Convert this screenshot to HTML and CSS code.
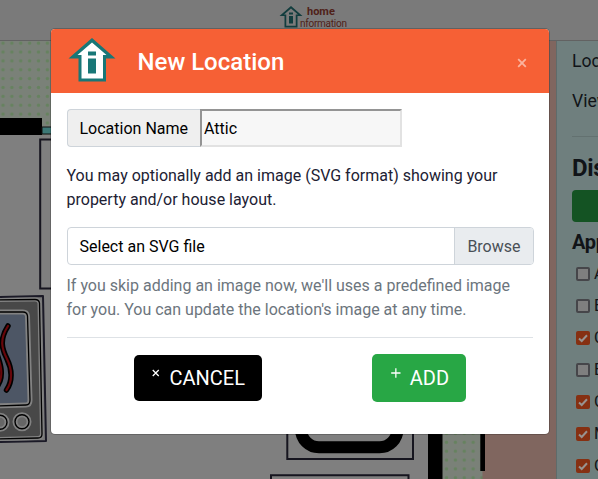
FILE: index.html
```
<!DOCTYPE html>
<html lang="en">
<head>
<meta charset="utf-8">
<title>New Location</title>
<link rel="stylesheet" href="styles.css">
</head>
<body>
<div class="page">
  <header class="topbar">
    <svg class="topbar-logo" width="24" height="24" viewBox="0 0 48 46"><path d="M24 1 47 21H37V44H11V21H1Z" fill="#123d3e"/><path d="M24 6 38 18H33.500V40.500H14.500V18H10Z" fill="#7a7a7a"/><path d="M20 14h8v4h-8zM20 21h8v15h-8z" fill="#123d3e"/></svg>
    <div class="brand"><span class="brand-home">home</span><span class="brand-info">nformation</span></div>
  </header>
  <main class="workspace">
    <svg class="plan" width="556" height="438" viewBox="0 41 556 438">
      <defs><pattern id="dots" x="-1.4" y="38.7" width="8.87" height="8.87" patternUnits="userSpaceOnUse"><circle cx="4.43" cy="4.43" r="1.75" fill="#66825f"/></pattern></defs>
      <path d="M0 41H556V479H0Z" fill="#7a8178"/>
      <path d="M0 41H556V479H0Z" fill="url(#dots)"/>
      <path d="M0 135H428V479H0Z" fill="#7f7f7f"/>
      <path d="M0 118H42V135H0Z"/>
      <path d="M42 127H60V134H42Z" fill="#3c7876" stroke="#111" stroke-width="1"/>
      <path d="M40.200 139.500H100V288.500H40.200Z" fill="#7f7f7f" stroke="#16151f" stroke-width="2"/>
      <g stroke-linejoin="round">
        <path d="M-5 297 43 296 46 441-5 442Z" fill="#777" stroke="#1b1a27" stroke-width="2"/>
        <path d="M-5 300 35 299.500Q39 299.500 39.500 303L42 434Q42 438 38 438L-5 439Z" fill="#484848" stroke="#828282" stroke-width="4"/>
        <path d="M-5 300 35 299.500Q39 299.500 39.500 303L42 434Q42 438 38 438L-5 439Z" fill="none" stroke="#000" stroke-width="1.300"/>
        <path d="M-5 312H23Q27 312 27.500 316L30 400Q30 405 26 405L-5 406Z" fill="#4d5665" stroke="#828282" stroke-width="5"/>
        <path d="M-5 312H23Q27 312 27.500 316L30 400Q30 405 26 405L-5 406Z" fill="none" stroke="#000" stroke-width="1.300"/>
        <g fill="none" stroke-linecap="round"><path d="M8 326C-1 340 2 349 7 359S13 381 6.500 390M-6 345C-2 358 4 370 0 381L-3 387" stroke="#000" stroke-width="5.500"/><path d="M8 326C-1 340 2 349 7 359S13 381 6.500 390M-6 345C-2 358 4 370 0 381L-3 387" stroke="#67060a" stroke-width="2.200"/></g>
        <g fill="#666" stroke="#828282" stroke-width="5"><circle cx="0" cy="422.300" r="7"/><circle cx="22" cy="421.700" r="7"/></g>
        <g fill="none" stroke="#000" stroke-width="1.400"><circle cx="0" cy="422.300" r="7"/><circle cx="22" cy="421.700" r="7"/></g>
      </g>
      <path d="M287.300 400H413V459H287.300Z" fill="#7f7f7f" stroke="#16151f" stroke-width="2"/>
      <rect x="301" y="390" width="96.500" height="57.300" rx="18" fill="#7f7f7f" stroke="#000" stroke-width="12"/>
      <path d="M271 475.200H408.500V490H271Z" fill="#7f7f7f" stroke="#16151f" stroke-width="2"/>
      <path d="M428 100H442.500V479H428Z"/>
      <path d="M485 41H556V479H482.500V471H485Z" fill="#80665f"/>
      <path d="M480.300 100H485V471H480.300Z"/>
    </svg>
    <aside class="sidebar">
      <div class="side-link">Location</div>
      <div class="side-link">View</div>
      <hr class="side-rule">
      <h2 class="side-title">Display</h2>
      <div class="side-button"></div>
      <h3 class="side-subtitle">Appliances</h3>
      <ul class="checks">
        <li><span class="box"></span>A</li>
        <li><span class="box"></span>B</li>
        <li><span class="box checked"><svg viewBox="0 0 14 14"><path d="M3 7.500 5.700 10 11 4.300"/></svg></span>C</li>
        <li><span class="box"></span>E</li>
        <li><span class="box checked"><svg viewBox="0 0 14 14"><path d="M3 7.500 5.700 10 11 4.300"/></svg></span>G</li>
        <li><span class="box checked"><svg viewBox="0 0 14 14"><path d="M3 7.500 5.700 10 11 4.300"/></svg></span>M</li>
        <li><span class="box checked"><svg viewBox="0 0 14 14"><path d="M3 7.500 5.700 10 11 4.300"/></svg></span>O</li>
      </ul>
    </aside>
  </main>
</div>
<div class="modal" role="dialog">
  <div class="modal-header">
    <svg width="48" height="46" viewBox="0 0 48 46"><path d="M24 1 47.500 21.500H38V44.500H10.500V21.500H.5Z" fill="#187777"/><path d="M24 5.500 38.500 18H35V41.500H13.500V18H9.500Z" fill="#fff"/><path d="M20 14.500h8v4h-8zM20 21.500h8v15h-8z" fill="#187777"/></svg>
    <h1>New Location</h1>
    <span class="close"><svg width="10" height="10" viewBox="0 0 10 10"><path d="M1.200 1.200 8.800 8.800M8.800 1.200 1.200 8.800"/></svg></span>
  </div>
  <div class="modal-body">
    <div class="name-group"><label for="name">Location Name</label><input id="name" value="Attic"></div>
    <p>You may optionally add an image (SVG format) showing your property and/or house layout.</p>
    <div class="file"><span class="file-name">Select an SVG file</span><span class="browse">Browse</span></div>
    <div class="help">If you skip adding an image now, we'll uses a predefined image for you. You can update the location's image at any time.</div>
    <div class="actions">
      <button class="btn cancel"><svg width="10" height="10" viewBox="0 0 10 10"><path d="M1 1 9 9M9 1 1 9"/></svg>CANCEL</button>
      <button class="btn add"><svg width="10" height="10" viewBox="0 0 10 10"><path d="M5 .2V9.800M.2 5H9.800"/></svg>ADD</button>
    </div>
  </div>
</div>
</body>
</html>
```
FILE: styles.css
```
* { box-sizing: border-box; }
body {
  margin: 0;
  font: 16px/24px Roboto, sans-serif;
  color: #212529;
  overflow: hidden;
}
h1, h2, h3, p, ul { margin: 0; padding: 0; }
.page { width: 598px; height: 479px; overflow: hidden; background: #7a7a7a; }
.topbar {
  display: flex;
  height: 41px;
  padding: 5px 0 0 278.5px;
  border-bottom: 1px solid #626262;
}
.topbar-logo { flex: none; }
.brand { display: flex; flex-direction: column; margin-left: -2.5px; color: #4f2118; }
.brand-home { font-size: 11px; line-height: 14px; font-weight: 700; margin-left: 7px; }
.brand-info { font-size: 10px; line-height: 10px; letter-spacing: -.25px; }
.workspace { display: flex; height: 438px; }
.plan { flex: none; display: block; }
.sidebar {
  flex: none;
  width: 200px;
  height: 438px;
  padding: 8px 16px 0 15px;
  border-left: 1px solid #5f6b6a;
  background: #6f7f7e;
  color: #111418;
}
.side-link { height: 40px; font-size: 17.600px; white-space: nowrap; }
.side-rule { margin: 7px 0 0; border: 0; border-top: 1px solid #637170; }
.side-title { margin-top: 17px; font-size: 24px; line-height: 29px; font-weight: 700; letter-spacing: -.3px; }
.side-button { height: 32px; margin-top: 7px; border-radius: 4px; background: #145323; }
.side-subtitle { margin-top: 8px; font-size: 20px; line-height: 24px; font-weight: 700; letter-spacing: -.3px; }
.checks { list-style: none; margin-top: 4px; padding-left: 4px; }
.checks li { display: flex; align-items: center; height: 32px; gap: 4px; font-size: 16px; }
.box { flex: none; width: 14px; height: 14px; border: 2px solid #46464a; border-radius: 2px; background: #7f7f7f; }
.box.checked { border: 0; background: #863012; }
.box svg { display: block; fill: none; stroke: #989390; stroke-width: 2; }
.modal {
  position: absolute;
  left: 50px;
  top: 28px;
  width: 500px;
  height: 407px;
  border: 1px solid rgba(0, 0, 0, .2);
  border-radius: 5px;
  background: #fff;
  background-clip: padding-box;
  overflow: hidden;
}
.modal-header {
  display: flex;
  align-items: center;
  height: 64px;
  padding: 0 22px 3px 17px;
  background: #f66035;
  color: #fff;
}
.modal-header h1 { margin: 4px 0 0 21.5px; font-size: 24px; line-height: 32px; font-weight: 500; }
.close { margin: 6px 0 0 auto; display: flex; }
.close svg { fill: none; stroke: #fbb39e; stroke-width: 1.800; }
.modal-body { padding: 16px; }
.name-group { display: flex; height: 38px; }
.name-group label {
  width: 134px;
  padding: 7px 11.5px;
  border: 1px solid #ced4da;
  border-right: 0;
  border-radius: 4px 0 0 4px;
  background: #efefef;
  color: #000;
  white-space: nowrap;
}
.name-group input {
  width: 202px;
  margin-left: -1px;
  padding: 2px 2px 0;
  border: 2px solid;
  border-color: #949494 #e2e2e2 #e2e2e2 #949494;
  border-radius: 0;
  outline: 0;
  background: #f7f7f7;
  color: #000;
  font: inherit;
}
.modal-body p { margin: 17px 0 15px -.5px; color: #212133; }
.file {
  display: flex;
  justify-content: space-between;
  height: 38px;
  width: 467px;
  border: 1px solid #ced4da;
  border-radius: 4px;
  overflow: hidden;
  line-height: 38px;
}
.file-name { padding-left: 11.5px; color: #000; }
.browse { padding: 0 12.5px 0 12px; border-left: 1px solid #ced4da; background: #e9ecef; color: #495057; }
.help { margin: 9px 0 0 -.5px; color: #6c757d; }
.actions {
  display: flex;
  justify-content: space-between;
  align-items: center;
  margin-top: 15px;
  padding: 16px 67px 0;
  border-top: 1px solid #dee2e6;
}
.btn {
  display: flex;
  align-items: center;
  height: 48px;
  padding: 0 17px;
  border: 0;
  border-radius: 5px;
  color: #fff;
  font: 20px/30px Roboto, sans-serif;
}
.btn svg { margin: -10px 9px 0 1px; fill: none; stroke: #fff; stroke-width: 1.300; }
.cancel { width: 128px; height: 46px; background: #000; }
.cancel svg { stroke-width: 1.700; margin-right: 10px; }
.add { width: 94px; background: #28a745; }
.add svg { margin-left: 2px; }
```
